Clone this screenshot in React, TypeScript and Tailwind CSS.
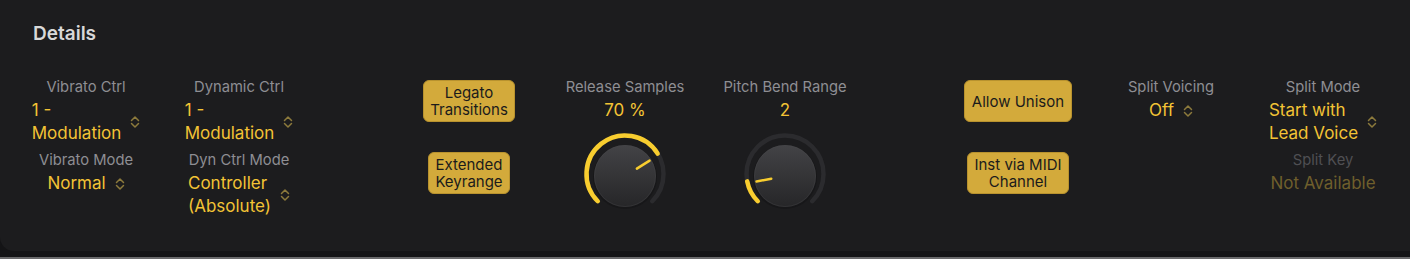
import React from 'react';

const FONT = { fontFamily: 'Inter, "Noto Sans", sans-serif' };

const Chevron = () => (
  <svg width="10" height="14" viewBox="0 0 10 14" className="shrink-0">
    <path d="M1.5 5.5 L5 2 L8.5 5.5" fill="none" stroke="#8c7a3c" strokeWidth="1.5" strokeLinecap="round" strokeLinejoin="round" />
    <path d="M1.5 8.5 L5 12 L8.5 8.5" fill="none" stroke="#8c7a3c" strokeWidth="1.5" strokeLinecap="round" strokeLinejoin="round" />
  </svg>
);

const Label = ({ children, dim }: { children: React.ReactNode; dim?: boolean }) => (
  <div className={`h-[20px] leading-[20px] text-[14.75px] whitespace-nowrap ${dim ? 'text-[#4f4f53]' : 'text-[#8e8e93]'}`}>{children}</div>
);

const Value = ({ lines, chevron = true, dim }: { lines: string[]; chevron?: boolean; dim?: boolean }) => (
  <div className="flex items-center gap-[9px] mt-[2px]">
    <div className={`text-[17px] leading-[23px] whitespace-nowrap ${dim ? 'text-[#6f5f2c]' : 'text-[#f3c335]'}`}>
      {lines.map((l, i) => (
        <div key={i}>{l}</div>
      ))}
    </div>
    {chevron && <Chevron />}
  </div>
);

const Toggle = ({ lines, w }: { lines: string[]; w: string }) => (
  <div className={`${w} h-[42px] rounded-[6px] bg-[#d3aa3b] border border-[#b8922e] flex flex-col items-center justify-center text-[15px] leading-[17px] text-[#1b1b1b]`}>
    {lines.map((l, i) => (
      <div key={i} className="whitespace-nowrap">{l}</div>
    ))}
  </div>
);

const polar = (cx: number, cy: number, r: number, deg: number) => {
  const a = (deg * Math.PI) / 180;
  return [cx + r * Math.sin(a), cy - r * Math.cos(a)];
};

const arc = (cx: number, cy: number, r: number, a0: number, a1: number) => {
  const [x0, y0] = polar(cx, cy, r, a0);
  const [x1, y1] = polar(cx, cy, r, a1);
  const large = a1 - a0 > 180 ? 1 : 0;
  return `M${x0} ${y0} A${r} ${r} 0 ${large} 1 ${x1} ${y1}`;
};

const Knob = ({ angle, id }: { angle: number; id: string }) => {
  const c = 45;
  const [px0, py0] = polar(c, c + 2, 14, angle);
  const [px1, py1] = polar(c, c + 2, 29, angle);
  return (
    <svg width="90" height="90" viewBox="0 0 90 90">
      <defs>
        <linearGradient id={`g${id}`} x1="0" y1="0" x2="0" y2="1">
          <stop offset="0" stopColor="#434346" />
          <stop offset="1" stopColor="#262628" />
        </linearGradient>
      </defs>
      <path d={arc(c, c, 38.5, -135, 135)} fill="none" stroke="#2b2b2e" strokeWidth="4.5" strokeLinecap="round" />
      <path d={arc(c, c, 38.5, -135, angle)} fill="none" stroke="#f8cd2f" strokeWidth="4.5" strokeLinecap="round" />
      <circle cx={c} cy={c + 3} r="32" fill="#141416" opacity="0.6" />
      <circle cx={c} cy={c + 2} r="31" fill={`url(#g${id})`} />
      <circle cx={c} cy={c + 2} r="30.5" fill="none" stroke="#4a4a4d" strokeWidth="0.6" opacity="0.6" />
      <line x1={px0} y1={py0} x2={px1} y2={py1} stroke="#f8cd2f" strokeWidth="2.5" strokeLinecap="round" />
    </svg>
  );
};

export default function App() {
  return (
    <div className="w-[1410px] h-[262px] bg-white overflow-hidden" style={FONT}>
      <div className="h-[259px] bg-[#141416] border-b-[2px] border-[#6a6a6c]">
        <div className="h-[251px] bg-[#1c1c1e] rounded-bl-[14px] pt-[21px]">
          <div className="pl-[33px] text-[19px] leading-[26px] font-semibold text-[#d8d8d8]">Details</div>
          <div className="flex items-start mt-[30px]">
            <div className="ml-[24px] w-[124px] flex flex-col items-center">
              <Label>Vibrato Ctrl</Label>
              <Value lines={['1 -', 'Modulation']} />
              <div className="mt-[5px]"><Label>Vibrato Mode</Label></div>
              <Value lines={['Normal']} />
            </div>
            <div className="ml-[29px] w-[124px] flex flex-col items-center">
              <Label>Dynamic Ctrl</Label>
              <Value lines={['1 -', 'Modulation']} />
              <div className="mt-[5px]"><Label>Dyn Ctrl Mode</Label></div>
              <Value lines={['Controller', '(Absolute)']} />
            </div>
            <div className="ml-[108px] w-[120px] flex flex-col items-center gap-[30px] pt-[3px]">
              <Toggle lines={['Legato', 'Transitions']} w="w-[92px]" />
              <Toggle lines={['Extended', 'Keyrange']} w="w-[82px]" />
            </div>
            <div className="ml-[26px] w-[140px] flex flex-col items-center">
              <Label>Release Samples</Label>
              <Value lines={['70 %']} chevron={false} />
              <div className="mt-[7px]"><Knob angle={58} id="a" /></div>
            </div>
            <div className="ml-[20px] w-[140px] flex flex-col items-center">
              <Label>Pitch Bend Range</Label>
              <Value lines={['2']} chevron={false} />
              <div className="mt-[7px]"><Knob angle={-101} id="b" /></div>
            </div>
            <div className="ml-[98px] w-[130px] flex flex-col items-center gap-[30px] pt-[3px]">
              <Toggle lines={['Allow Unison']} w="w-[108px]" />
              <Toggle lines={['Inst via MIDI', 'Channel']} w="w-[102px]" />
            </div>
            <div className="ml-[23px] w-[130px] flex flex-col items-center">
              <Label>Split Voicing</Label>
              <Value lines={['Off']} />
            </div>
            <div className="ml-[22px] w-[130px] flex flex-col items-center">
              <Label>Split Mode</Label>
              <Value lines={['Start with', 'Lead Voice']} />
              <div className="mt-[5px]"><Label dim>Split Key</Label></div>
              <Value lines={['Not Available']} chevron={false} dim />
            </div>
          </div>
        </div>
      </div>
    </div>
  );
}
